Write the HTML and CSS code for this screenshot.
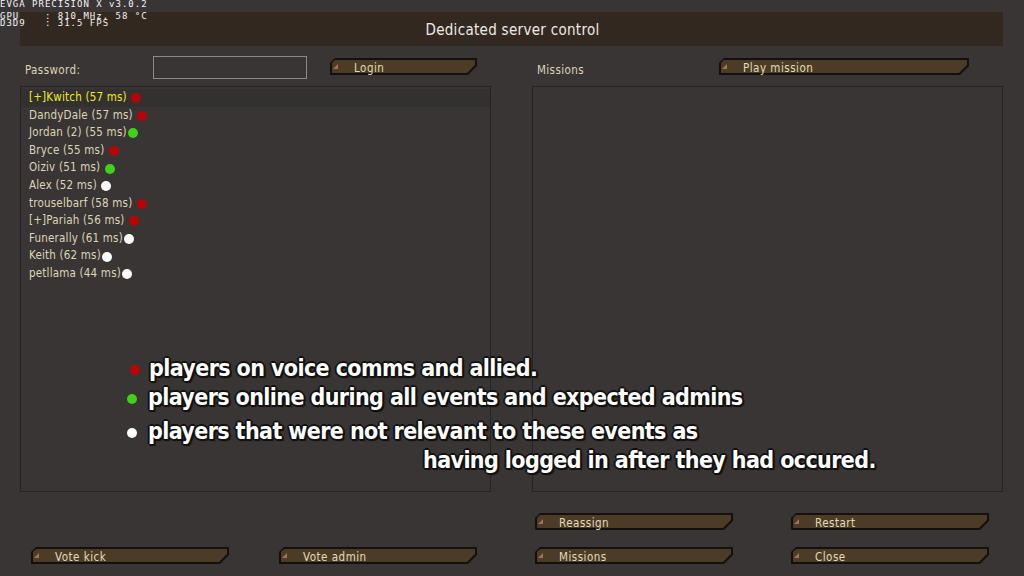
FILE: index.html
```html
<!DOCTYPE html>
<html>
<head>
    <title>Dedicated server control</title>
    <link rel="stylesheet" href="styles.css">
</head>
<body>

<div class="osd">
    <div>EVGA PRECISION X v3.0.2</div>
    <div class="osd-stats">GPU    : 810 MHz, 58 °C
D3D9   : 31.5 FPS</div>
</div>

<div class="screen">
    <header class="title-bar">
        <h1>Dedicated server control</h1>
    </header>

    <div class="columns">
        <div class="column">
            <div class="top-row">
                <span class="label pass-label">Password:</span>
                <div class="input"></div>
                <div class="btn login-btn"><span>Login</span></div>
            </div>
            <div class="panel">
                <ul class="players">
                    <li class="me">[+]Kwitch (57 ms) <i class="dot red"></i></li>
                    <li>DandyDale (57 ms) <i class="dot red"></i></li>
                    <li>Jordan (2) (55 ms)<i class="dot green"></i></li>
                    <li>Bryce (55 ms) <i class="dot red"></i></li>
                    <li>Oiziv (51 ms) <i class="dot green"></i></li>
                    <li>Alex (52 ms) <i class="dot white"></i></li>
                    <li>trouselbarf (58 ms) <i class="dot red"></i></li>
                    <li>[+]Pariah (56 ms) <i class="dot red"></i></li>
                    <li>Funerally (61 ms)<i class="dot white"></i></li>
                    <li>Keith (62 ms)<i class="dot white"></i></li>
                    <li>petllama (44 ms)<i class="dot white"></i></li>
                </ul>
            </div>
            <div class="btn-grid left-btns">
                <div class="btn"><span>Vote kick</span></div>
                <div class="btn"><span>Vote admin</span></div>
            </div>
        </div>

        <div class="column">
            <div class="top-row">
                <span class="label missions-label">Missions</span>
                <div class="btn play-btn"><span>Play mission</span></div>
            </div>
            <div class="panel"></div>
            <div class="btn-grid right-btns">
                <div class="btn"><span>Reassign</span></div>
                <div class="btn"><span>Restart</span></div>
                <div class="btn"><span>Missions</span></div>
                <div class="btn"><span>Close</span></div>
            </div>
        </div>
    </div>
</div>

<div class="legend">
    <p class="l1"><i class="ldot red"></i>players on voice comms and allied.</p>
    <p class="l2"><i class="ldot green"></i>players online during all events and expected admins</p>
    <p class="l3"><i class="ldot white"></i>players that were not relevant to these events as</p>
    <p class="l4">having logged in after they had occured.</p>
</div>

</body>
</html>
```

FILE: styles.css
```css
body {
    margin: 0;
    width: 1024px;
    height: 576px;
    overflow: hidden;
    background-color: #393534;
    font-family: "DejaVu Sans Condensed", "DejaVu Sans", sans-serif;
    color: #dcd6b4;
    position: relative;
}

/* overlay from the gpu tool */
.osd {
    position: absolute;
    left: 0;
    top: 0;
    font-family: "DejaVu Sans Mono", monospace;
    font-size: 9px;
    line-height: 8px;
    letter-spacing: 1px;
    color: #f4f4f4;
    z-index: 5;
}

.osd-stats {
    white-space: pre;
    margin-top: 5px;
    line-height: 7px;
}

.screen {
    padding: 12px 21px 0 20px;
}

.title-bar {
    background-color: #33281f;
    height: 34px;
    display: flex;
    align-items: center;
    justify-content: center;
}

.title-bar h1 {
    margin: 0;
    font-size: 15px;
    font-weight: normal;
    letter-spacing: 0.3px;
    color: #ecebe6;
    padding-left: 2px;
    padding-top: 1px;
}

.columns {
    display: grid;
    grid-template-columns: 471px 471px;
    column-gap: 41px;
}

.top-row {
    display: flex;
    align-items: center;
    height: 40px;
}

.label {
    font-size: 11.5px;
    letter-spacing: 0.4px;
    padding-top: 7px;
}

.pass-label {
    width: 128px;
    padding-left: 5px;
}

.missions-label {
    width: 182px;
    padding-left: 5px;
}

.input {
    width: 152px;
    height: 21px;
    border: 1px solid #8c8a88;
    margin-top: 2px;
}

.login-btn {
    width: 147px;
    margin-left: 23px;
    margin-top: 1px;
}

.play-btn {
    width: 250px;
    margin-top: 1px;
}

.panel {
    height: 404px;
    border: 1px solid #262322;
}

.players {
    list-style: none;
    margin: 0;
    padding: 2px 0 0 0;
    font-size: 11.5px;
    letter-spacing: 0.2px;
}

.players li {
    height: 17.6px;
    line-height: 17.6px;
    padding-left: 8px;
    display: flex;
    align-items: center;
    white-space: pre;
}

.players li.me {
    background-color: #333030;
    color: #f0ec1c;
}

.dot {
    display: inline-block;
    width: 10px;
    height: 10px;
    border-radius: 50%;
    margin-left: 1px;
    margin-top: 1px;
}

.red { background-color: #b80404; }
.green { background-color: #3fd216; }
.white { background-color: #ffffff; }

.btn-grid {
    display: grid;
    grid-template-columns: 198px 198px;
    row-gap: 17px;
    grid-auto-rows: 17px;
}

.left-btns {
    column-gap: 50px;
    padding: 55px 0 0 11px;
}

.right-btns {
    column-gap: 58px;
    padding: 21px 0 0 3px;
}

/* chamfered game button */
.btn {
    position: relative;
    height: 17px;
    background-color: #121110;
    clip-path: polygon(5px 0, 100% 0, 100% 8px, calc(100% - 9px) 100%, 0 100%, 0 5px);
}

.btn::before {
    content: "";
    position: absolute;
    left: 2px;
    top: 2px;
    right: 2px;
    bottom: 2px;
    background-color: #4c3c26;
    clip-path: polygon(3px 0, 100% 0, 100% 5px, calc(100% - 8px) 100%, 0 100%, 0 3px);
}

.btn::after {
    content: "";
    position: absolute;
    left: 3px;
    top: 6px;
    width: 5px;
    height: 5px;
    background-color: #a7704e;
    clip-path: polygon(100% 0, 100% 100%, 0 100%);
}

.btn span {
    position: relative;
    z-index: 1;
    display: block;
    padding-left: 24px;
    font-size: 11.5px;
    line-height: 20px;
    letter-spacing: 0.5px;
    color: #e2dcb8;
}

/* annotation drawn over the screenshot */
.legend {
    position: absolute;
    left: 127px;
    top: 353px;
    font-family: "DejaVu Sans Condensed", "DejaVu Sans", sans-serif;
    font-weight: bold;
    font-size: 23px;
    letter-spacing: -0.6px;
    color: #ffffff;
    text-shadow:
        -2px 0 0 #111, 2px 0 0 #111, 0 -2px 0 #111, 0 2px 0 #111,
        -1px -1px 0 #111, 1px -1px 0 #111, -1px 1px 0 #111, 1px 1px 0 #111,
        2px 2px 1px #111;
}

.legend p {
    margin: 0;
    display: flex;
    align-items: center;
    height: 29px;
    white-space: nowrap;
}

.legend .l3 {
    margin-top: 5px;
}

.legend .l4 {
    padding-left: 296px;
    height: 30px;
}

.ldot {
    display: inline-block;
    width: 10px;
    height: 10px;
    border-radius: 50%;
    margin-right: 11px;
    margin-top: 4px;
}

.l1 .ldot {
    margin-left: 3px;
    margin-right: 9px;
}
```
